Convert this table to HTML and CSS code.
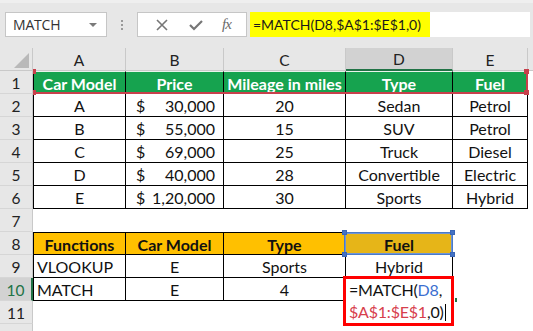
FILE: index.html
```html
<!DOCTYPE html>
<html>
<head>
<meta charset="utf-8">
<link rel="stylesheet" href="styles.css">
</head>
<body>
<div class="toolbar">
  <div class="namebox">
    <span class="nb-text">MATCH</span>
    <span class="nb-arrow"></span>
  </div>
  <div class="grip"><i></i><i></i><i></i></div>
  <div class="fxbtns">
    <svg class="ico" width="14" height="14" viewBox="0 0 14 14"><path d="M2 2 L12 12 M12 2 L2 12" stroke="#767676" stroke-width="1.6" fill="none"/></svg>
    <svg class="ico" width="16" height="14" viewBox="0 0 16 14"><path d="M2 7 L6 11 L14 3" stroke="#767676" stroke-width="2.2" fill="none"/></svg>
    <span class="fx">fx</span>
  </div>
  <div class="formula"><span class="formula-text">=MATCH(D8,$A$1:$E$1,0)</span></div>
</div>

<div class="sheet">
  <div class="corner"><span class="tri"></span></div>
  <div class="ch">A</div>
  <div class="ch">B</div>
  <div class="ch">C</div>
  <div class="ch ch-sel">D</div>
  <div class="ch">E</div>
  <div class="ch ch-rest"></div>

  <!-- row 1 -->
  <div class="rh">1</div>
  <div class="c t hd first">Car Model</div>
  <div class="c t hd">Price</div>
  <div class="c t hd">Mileage in miles</div>
  <div class="c t hd">Type</div>
  <div class="c t hd">Fuel</div>
  <div class="c"></div>

  <!-- row 2 -->
  <div class="rh">2</div>
  <div class="c t first">A</div>
  <div class="c t money"><span>$</span><span>30,000</span></div>
  <div class="c t">20</div>
  <div class="c t">Sedan</div>
  <div class="c t">Petrol</div>
  <div class="c"></div>

  <!-- row 3 -->
  <div class="rh">3</div>
  <div class="c t first">B</div>
  <div class="c t money"><span>$</span><span>55,000</span></div>
  <div class="c t">15</div>
  <div class="c t">SUV</div>
  <div class="c t">Petrol</div>
  <div class="c"></div>

  <!-- row 4 -->
  <div class="rh">4</div>
  <div class="c t first">C</div>
  <div class="c t money"><span>$</span><span>69,000</span></div>
  <div class="c t">25</div>
  <div class="c t">Truck</div>
  <div class="c t">Diesel</div>
  <div class="c"></div>

  <!-- row 5 -->
  <div class="rh">5</div>
  <div class="c t first">D</div>
  <div class="c t money"><span>$</span><span>40,000</span></div>
  <div class="c t">28</div>
  <div class="c t">Convertible</div>
  <div class="c t">Electric</div>
  <div class="c"></div>

  <!-- row 6 -->
  <div class="rh">6</div>
  <div class="c t first">E</div>
  <div class="c t money"><span>$</span><span>1,20,000</span></div>
  <div class="c t">30</div>
  <div class="c t">Sports</div>
  <div class="c t">Hybrid</div>
  <div class="c"></div>

  <!-- row 7 -->
  <div class="rh">7</div>
  <div class="c"></div><div class="c"></div><div class="c"></div><div class="c"></div><div class="c"></div><div class="c"></div>

  <!-- row 8 -->
  <div class="rh">8</div>
  <div class="c t top first or">Functions</div>
  <div class="c t top or">Car Model</div>
  <div class="c t top or">Type</div>
  <div class="c t top gold">Fuel</div>
  <div class="c"></div>
  <div class="c"></div>

  <!-- row 9 -->
  <div class="rh">9</div>
  <div class="c t first left">VLOOKUP</div>
  <div class="c t">E</div>
  <div class="c t">Sports</div>
  <div class="c t">Hybrid</div>
  <div class="c"></div>
  <div class="c"></div>

  <!-- row 10 -->
  <div class="rh rh-sel">10</div>
  <div class="c t first left">MATCH</div>
  <div class="c t">E</div>
  <div class="c t">4</div>
  <div class="c t"></div>
  <div class="c"></div>
  <div class="c"></div>

  <!-- row 11 -->
  <div class="rh">11</div>
  <div class="c"></div><div class="c"></div><div class="c"></div><div class="c"></div><div class="c"></div><div class="c"></div>

  <!-- row 12 -->
  <div class="rh rh-last">12</div>
  <div class="c"></div><div class="c"></div><div class="c"></div><div class="c"></div><div class="c"></div><div class="c"></div>

  <!-- overlays -->
  <div class="range-red">
    <span class="h h-tl"></span><span class="h h-tr"></span><span class="h h-bl"></span><span class="h h-br"></span>
  </div>
  <div class="sel-blue">
    <span class="b b-tl"></span><span class="b b-tr"></span><span class="b b-bl"></span><span class="b b-br"></span>
  </div>
  <div class="editor">
    <div class="ed-line">=MATCH(<span class="ref-blue">D8</span>,</div>
    <div class="ed-line"><span class="ref-red">$A$1:$E$1</span>,0)<span class="caret"></span></div>
  </div>
  <span class="fill-mark"></span>
</div>
</body>
</html>
```

FILE: styles.css
```css
* { box-sizing: border-box; }
html, body {
  margin: 0;
  padding: 0;
  width: 533px;
  height: 331px;
  overflow: hidden;
  background: #e7e7e7;
}

.toolbar {
  height: 48px;
  display: flex;
  align-items: flex-start;
  padding: 9px 0 0 5px;
  background: #e7e7e7;
  border-top: 3px solid #efefef;
}

.namebox {
  width: 102px;
  height: 25px;
  background: #fff;
  border: 1px solid #c6c6c6;
  display: flex;
  align-items: center;
  justify-content: space-between;
  padding: 0 7px 0 7px;
}
.nb-text {
  font-family: "Open Sans", "Noto Sans", sans-serif;
  font-size: 14px;
  color: #333;
  letter-spacing: -0.2px;
}
.nb-arrow {
  width: 0; height: 0;
  border-left: 4px solid transparent;
  border-right: 4px solid transparent;
  border-top: 4px solid #7a7a7a;
  margin-right: 2px;
}

.grip {
  width: 30px;
  height: 25px;
  display: flex;
  flex-direction: column;
  align-items: center;
  justify-content: center;
  gap: 2px;
}
.grip i {
  display: block;
  width: 2px;
  height: 2px;
  background: #9a9a9a;
}

.fxbtns {
  width: 110px;
  height: 25px;
  background: #fff;
  border: 1px solid #c6c6c6;
  display: flex;
  align-items: center;
  justify-content: space-around;
  padding: 0 6px 0 8px;
}
.fx {
  font-family: "Liberation Serif", serif;
  font-style: italic;
  font-size: 15px;
  color: #6a6a6a;
  letter-spacing: -1px;
}

.formula {
  margin-left: 3px;
  width: 280px;
  height: 25px;
  background: #fff;
  display: flex;
}
.formula-text {
  background: #ffff00;
  width: 180px;
  height: 25px;
  display: flex;
  align-items: center;
  padding-left: 3px;
  font-family: "Lato", sans-serif;
  font-size: 14px;
  color: #1b1b1b;
}

.sheet {
  position: relative;
  display: grid;
  grid-template-columns: 33px 93px 98px 122px 107px 75px 1fr;
  grid-template-rows: repeat(13, 23px);
  background: #fff;
  font-family: "Lato", sans-serif;
  font-size: 16px;
  color: #111;
}

.corner {
  background: #e7e7e7;
  border-right: 1px solid #c9c9c9;
  border-bottom: 1px solid #c9c9c9;
  position: relative;
}
.tri {
  position: absolute;
  right: 3px;
  bottom: 2px;
  width: 0; height: 0;
  border-left: 15px solid transparent;
  border-bottom: 15px solid #b9b9b9;
}
.ch {
  background: #e7e7e7;
  border-right: 1px solid #c9c9c9;
  border-bottom: 1px solid #c9c9c9;
  display: flex;
  align-items: center;
  justify-content: center;
  font-size: 15.5px;
  color: #222;
  padding-top: 1px;
}
.ch-sel {
  background: #d2d2d2;
  border-bottom: 2px solid #217346;
}
.ch-rest { border-right: none; }

.rh {
  background: #e7e7e7;
  border-right: 1px solid #c9c9c9;
  border-bottom: 1px solid #d6d6d6;
  display: flex;
  align-items: center;
  justify-content: center;
  font-size: 15.5px;
  color: #222;
  padding-top: 1px;
}
.rh-sel {
  background: #d2d2d2;
  border-right: 2px solid #217346;
  color: #217346;
}
.rh-last {
  align-items: flex-start;
  padding-top: 3px;
}

.c {
  background: #fff;
  display: flex;
  align-items: center;
  justify-content: center;
  white-space: nowrap;
  padding-top: 1px;
}
.t {
  border-right: 1px solid #000;
  border-bottom: 1px solid #000;
}
.first { border-left: 1px solid #000; }
.top { border-top: 1px solid #000; }
.left { justify-content: flex-start; padding-left: 3px; }

.hd {
  background: #16a34f;
  color: #fff;
  font-weight: bold;
  border-top: 1px solid #e9f3ec;
}
.money {
  justify-content: space-between;
  padding: 1px 8px 0 10px;
}
.or {
  background: #ffc000;
  font-weight: bold;
}
.gold {
  background: #e6b518;
  font-weight: bold;
}

.range-red {
  position: absolute;
  left: 33px;
  top: 23px;
  width: 495px;
  height: 23px;
  border-bottom: 2px solid #c8404b;
  border-right: 2px solid #c8404b;
  pointer-events: none;
}
.h {
  position: absolute;
  width: 5px;
  height: 5px;
  background: #c8404b;
}
.h-tl { left: 0; top: -2px; width: 3px; }
.h-tr { right: -3px; top: -2px; }
.h-bl { left: 0; bottom: -3px; width: 3px; }
.h-br { right: -3px; bottom: -3px; }

.sel-blue {
  position: absolute;
  left: 344px;
  top: 184px;
  width: 109px;
  height: 23px;
  border: 1px solid #4a7ac8;
  box-shadow: inset 0 0 0 1px #6f95d6;
}
.b {
  position: absolute;
  width: 5px;
  height: 5px;
  background: #4472c4;
  border: 1px solid #3a65b4;
}
.b-tl { left: -3px; top: -3px; }
.b-tr { right: -3px; top: -3px; }
.b-bl { left: -3px; bottom: -3px; }
.b-br { right: -3px; bottom: -3px; }

.editor {
  position: absolute;
  left: 343px;
  top: 228px;
  width: 111px;
  height: 50px;
  background: #fff;
  border: 3px solid #ff0000;
  padding: 0 0 0 3px;
  font-size: 16px;
  color: #111;
}
.ed-line {
  height: 22px;
  line-height: 22px;
  white-space: nowrap;
  letter-spacing: -0.2px;
}
.ref-blue { color: #3c6fd0; }
.ref-red { color: #d7404c; }
.caret {
  display: inline-block;
  width: 1px;
  height: 17px;
  background: #000;
  vertical-align: -3px;
  margin-left: 1px;
}
.fill-mark {
  position: absolute;
  left: 455px;
  top: 250px;
  width: 2px;
  height: 4px;
  background: #217346;
}
```
